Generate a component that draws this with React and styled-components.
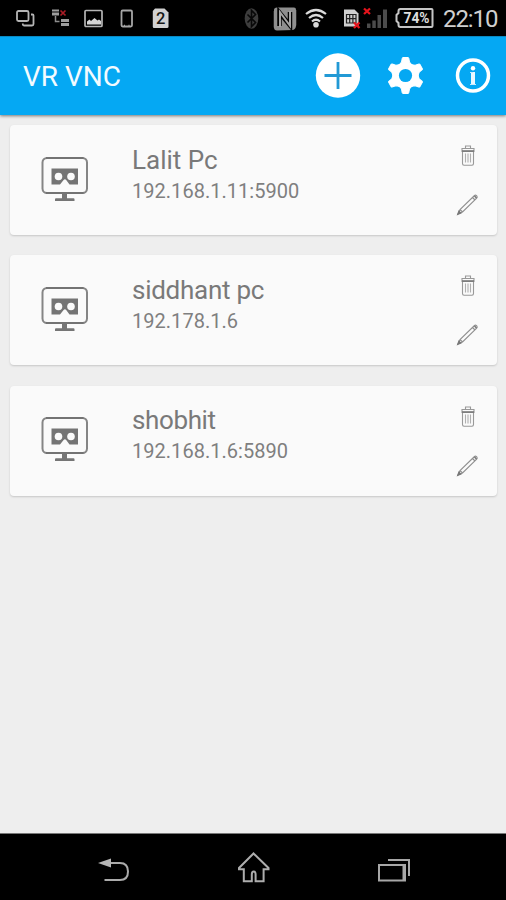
import React from "react";
import styled, { createGlobalStyle } from "styled-components";

const GlobalStyle = createGlobalStyle`
  * { box-sizing: border-box; }
  html, body { margin: 0; padding: 0; background: #eeeeee; }
  body { font-family: Roboto, "Noto Sans", sans-serif; }
`;

const Screen = styled.div`
  display: flex;
  flex-direction: column;
  width: 506px;
  height: 900px;
  overflow: hidden;
  background: #eeeeee;
`;

const StatusBar = styled.div`
  display: flex;
  align-items: flex-start;
  flex: 0 0 36px;
  padding: 6px 0 0 15px;
  background: #000;
`;

const Icon = styled.svg`
  display: block;
  flex: none;
  overflow: visible;
  margin-left: ${(p) => p.$gap || 0}px;
`;

const Clock = styled.span`
  flex: none;
  margin-left: 8px;
  font-size: 24px;
  line-height: 26px;
  letter-spacing: -1.1px;
  color: #cfcfcf;
`;

const AppBar = styled.header`
  display: flex;
  align-items: center;
  flex: 0 0 79px;
  padding-left: 23px;
  background: #05a8f3;
  border-top: 1px solid #0a89c2;
  box-shadow: 0 1px 3px rgba(0, 0, 0, 0.5);
  z-index: 1;
`;

const Title = styled.h1`
  width: 292px;
  margin: 0;
  padding-top: 1px;
  font-size: 28px;
  font-weight: 400;
  line-height: 36px;
  color: #f3fbff;
`;

const BarButton = styled.button`
  display: flex;
  flex: none;
  margin: 0 0 0 ${(p) => p.$gap || 0}px;
  padding: 0;
  border: 0;
  background: none;
`;

const List = styled.main`
  display: flex;
  flex-direction: column;
  flex: 1;
  gap: 20.4px;
  padding: 10px 9px 0 10px;
`;

const Card = styled.article`
  display: flex;
  flex: 0 0 110px;
  border-radius: 4px;
  background: #fafafa;
  box-shadow: 0 1px 2px rgba(0, 0, 0, 0.17);
`;

const DeviceSlot = styled.div`
  width: 122px;
  padding: 30.500px 0 0 31px;
`;

const Details = styled.div`
  flex: 1;
  padding-top: 18.600px;
`;

const Name = styled.div`
  font-size: 26px;
  line-height: 32px;
  letter-spacing: ${(p) => p.$spacing || 0}px;
  color: #797979;
`;

const Address = styled.div`
  font-size: 20px;
  line-height: 26px;
  margin-top: 2px;
  letter-spacing: 0.03px;
  color: #7f7f7f;
`;

const Actions = styled.div`
  display: flex;
  flex-direction: column;
  align-items: center;
  gap: 26px;
  width: 59px;
  padding-top: 19px;
`;

const NavBar = styled.nav`
  display: flex;
  align-items: flex-start;
  flex: 0 0 67px;
  padding: 24px 0 0 98px;
  border-top: 1px solid #777;
  background: #000;
`;

function StatusIcons() {
  return (
    <>
      <Icon width="20" height="24" fill="none" stroke="#b5b5b5" strokeWidth="1.8">
        <rect x="2" y="5" width="11.5" height="10" rx="1.5" />
        <path d="M16 8.5h1.5q1 0 1 1V18q0 1.5-1.5 1.5H9q-1.200 0-1.200-1.200V17.500" />
      </Icon>
      <Icon $gap={16} width="20" height="24">
        <path d="M1 3.500h7v2H1zM1 6.500h7v3H1zM10 13h8v3h-8zM10 17h8v3h-8z" fill="#9d9d9d" />
        <path d="M4.500 10v5.500h4" fill="none" stroke="#8d8d8d" strokeWidth="1.500" />
        <path d="M9.500 4.500l5 5m0-5l-5 5" stroke="#a91c25" strokeWidth="1.700" />
      </Icon>
      <Icon $gap={13} width="20" height="24">
        <rect x="1" y="4.500" width="17" height="16" rx="1" fill="none" stroke="#b5b5b5" strokeWidth="1.700" />
        <path d="M3 18.500v-3l2.500-2 1.500 1.500 3.500-3 3 2.500 1.500-1 2 1.500v3.500z" fill="#d5d5d5" />
      </Icon>
      <Icon $gap={16} width="14" height="24">
        <rect x="1.500" y="4.500" width="10.500" height="16" rx="1.200" fill="none" stroke="#a6a6a6" strokeWidth="1.800" />
        <path d="M4 19.500h1m3.500 0h1" stroke="#a6a6a6" strokeWidth="1.500" />
      </Icon>
      <Icon $gap={18} width="20" height="24">
        <path d="M3 2.500h9.500l4 4V20.500q0 1.500-1.500 1.500H2q-1.200 0-1.200-1.500V5z" fill="#d1d1d1" />
        <text x="8.600" y="18.300" textAnchor="middle" fontFamily="Roboto" fontWeight="500" fontSize="16.500" fill="#161616">2</text>
      </Icon>

      <Icon $gap={72} width="16" height="24">
        <ellipse cx="7.500" cy="12.500" rx="6.800" ry="10.300" fill="#3d3d3d" />
        <path d="M3.500 8.500l8 8-4 4v-16l4 4-8 8" fill="none" stroke="#080808" strokeWidth="1.600" />
      </Icon>
      <Icon $gap={13} width="24" height="26">
        <path d="M4 1.500h17q2 0 2 2v16q0 3-3 4.500L4 24.500q-3 0-3-3V4q0-2.500 3-2.500z" fill="#8f8f8f" />
        <path d="M6.500 20V6.500L17 19.500V6" fill="none" stroke="#050505" strokeWidth="4.500" />
        <path d="M7 21V6.200L17 19.800V5" fill="none" stroke="#a5a5a5" strokeWidth="2" />
        <path d="M2 5v16.500M22 4v15.500" stroke="#8f8f8f" strokeWidth="2.500" />
      </Icon>
      <Icon $gap={8} width="24" height="24" fill="none" stroke="#dadada" strokeWidth="2.200">
        <path d="M1 8q10-8 20 0M4 12q7-6 14 0M7 15.500q4-3.500 8 0" />
        <circle cx="11" cy="18.800" r="2.800" fill="#dadada" stroke="none" />
      </Icon>
      <Icon $gap={14} width="20" height="24">
        <path d="M1 3.500h10.500l4 4V20.500H1z" fill="#d0d0d0" />
        <path d="M3.500 8.500h9.500v8.500H3.500zM3.500 12.700h9.500M6.700 8.500v8.500M9.900 8.500v8.500" fill="none" stroke="#222" strokeWidth="1.200" />
        <path d="M11 16.500l5.500 5.500m0-5.500L11 22" stroke="#e5141c" strokeWidth="2.300" />
      </Icon>
      <Icon $gap={0} width="26" height="24">
        <path d="M4 17.500h3.500V22H4zM9.300 14.500h3.500V22H9.300zM14.500 9h3.500v13h-3.500zM20 3.500h4V22h-4z" fill="#4c4c4c" />
        <path d="M1 2.500l6 5.500m0-5.500L1 8" stroke="#e5141c" strokeWidth="2.300" />
      </Icon>
      <Icon $gap={6} width="40" height="24">
        <path d="M5.500 3h31q1 0 1 1v16q0 1-1 1h-31q-2 0-2-2v-2l-2-2V9l2-2V5q0-2 2-2z" fill="#020202" stroke="#c5c5c5" strokeWidth="2" />
        <text x="21.500" y="17.300" textAnchor="middle" fontFamily="Roboto" fontWeight="700" fontSize="14.500" textLength="26" lengthAdjust="spacingAndGlyphs" fill="#dedede">74%</text>
      </Icon>
    </>
  );
}

function DeviceIcon() {
  return (
    <Icon width="48" height="48">
      <rect x="1.500" y="2" width="44.500" height="35" rx="4.500" fill="none" stroke="#858585" strokeWidth="2" />
      <path d="M5 2h37.500M5 37h37.500" stroke="#737373" strokeWidth="2" />
      <path d="M21 37h5v5.200h6.500q1 0 1 1v1.800H14v-1.800q0-1 1-1h6z" fill="#757575" />
      <path d="M10.500 12.500h26.500V28.500H28.500l-3.300-4.500q-1.300-1.700-2.600 0L19 28.500h-8.500z" fill="#747474" />
      <circle cx="17.500" cy="20.500" r="3.800" fill="#fafafa" />
      <circle cx="30" cy="20.500" r="3.800" fill="#fafafa" />
    </Icon>
  );
}

function TrashIcon() {
  return (
    <Icon width="16" height="23" fill="none" stroke="#999" strokeWidth="1.100">
      <path d="M5.500 4V2h5v2M2 4.500h12v3H2zM2.500 7v12.500q0 1.700 1.500 1.700h8q1.500 0 1.500-1.700V7" />
      <path d="M2 7h12" stroke="#777" strokeWidth="1.600" />
      <path d="M5.500 9.500v9M8 9.500v9M10.500 9.500v9" stroke="#b0b0b0" />
    </Icon>
  );
}

function PencilIcon() {
  return (
    <Icon width="24" height="24" viewBox="0 0 24 24" fill="none" stroke="#8f8f8f" strokeWidth="1.100">
      <path d="M2 21l2-4.500L18.500 2.500q1-.8 2 .2l.4.400q.8 1-.2 2L6.500 19zM4 16.500l2.500 2.500M16.500 4.500l2.500 2.500" />
      <path d="M2 21l1-2.600 1.500 1.500zM18.500 3l2 2" fill="#777" stroke="#777" strokeWidth="1.500" />
    </Icon>
  );
}

const devices = [
  { name: "Lalit Pc", address: "192.168.1.11:5900", nameSpacing: 0 },
  { name: "siddhant pc", address: "192.178.1.6", nameSpacing: -0.27 },
  { name: "shobhit", address: "192.168.1.6:5890", nameSpacing: -0.38 },
];

const gearTeeth = [0, 60, 120, 180, 240, 300];

export default function App() {
  return (
    <Screen>
      <GlobalStyle />
      <StatusBar>
        <StatusIcons />
        <Clock>22:10</Clock>
      </StatusBar>
      <AppBar>
        <Title>VR VNC</Title>
        <BarButton aria-label="Add">
          <Icon width="46" height="46">
            <circle cx="23" cy="22.500" r="22.200" fill="#fff" />
            <path d="M9.500 22.500h27M23 9v27" stroke="#2299d5" strokeWidth="2.800" />
          </Icon>
        </BarButton>
        <BarButton aria-label="Settings" $gap={25}>
          <Icon width="40" height="40" viewBox="-19.500 -19.500 40 40">
            <circle r="13" fill="#fff" />
            {gearTeeth.map((angle) => (
              <path key={angle} transform={`rotate(${angle})`} d="M-6.500-10.500L-4-13.500-3.200-17.500Q-3-18-2.500-18h5q.6 0 .8.700L4-13.500l2.500 3z" fill="#fff" stroke="#fff" strokeLinejoin="round" />
            ))}
            <circle r="6.600" fill="#05a8f3" />
          </Icon>
        </BarButton>
        <BarButton aria-label="Information" $gap={29}>
          <Icon width="36" height="36">
            <circle cx="18" cy="17.500" r="15.500" fill="none" stroke="#fff" strokeWidth="3.500" />
            <path d="M18 14v13" stroke="#eaf8ff" strokeWidth="4" />
            <path d="M15 14.500H18M15 26.500h6" stroke="#c5eaff" strokeWidth="1" />
            <circle cx="18" cy="10.300" r="2.200" fill="#fff" />
          </Icon>
        </BarButton>
      </AppBar>
      <List>
        {devices.map((d) => (
          <Card key={d.name}>
            <DeviceSlot>
              <DeviceIcon />
            </DeviceSlot>
            <Details>
              <Name $spacing={d.nameSpacing}>{d.name}</Name>
              <Address>{d.address}</Address>
            </Details>
            <Actions>
              <TrashIcon />
              <PencilIcon />
            </Actions>
          </Card>
        ))}
      </List>
      <NavBar>
        <Icon width="34" height="28" fill="none" stroke="#ababab" strokeWidth="2">
          <path d="M11 5h11q8 0 8 8.500t-8 8.500H6.500" />
          <path d="M0 5l13-4.500v9z" fill="#b5b5b5" stroke="none" />
        </Icon>
        <Icon $gap={105} width="34" height="32" fill="none" stroke="#adadad" strokeWidth="2">
          <path d="M16.500-4.500L2 10v1.300h4.800v12h8V16.500q0-3 1.900-3t1.900 3v6.800h8v-12h4.900v-1.300z" />
        </Icon>
        <Icon $gap={106} width="34" height="30" stroke="#a7a7a7" fill="none" strokeWidth="2">
          <path d="M2 7h26v15.500h-26zM11 2h21v16" />
          <path d="M27 7.500v15" strokeWidth="3" />
        </Icon>
      </NavBar>
    </Screen>
  );
}
